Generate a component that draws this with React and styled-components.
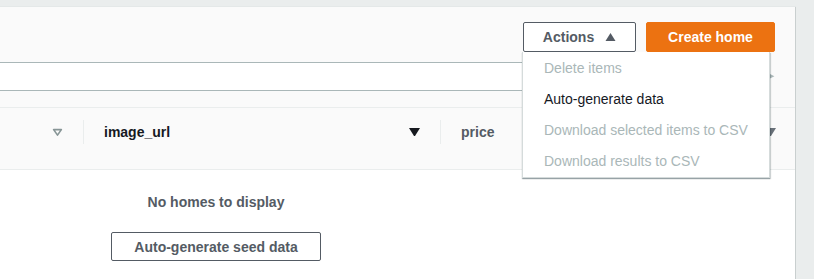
import React from "react";
import styled, { createGlobalStyle } from "styled-components";

// ===== Global =====
const GlobalStyle = createGlobalStyle`
  html, body {
    margin: 0;
    padding: 0;
    background: #eaeded;
    font-family: "Liberation Sans", Arial, sans-serif;
    overflow: hidden;
  }
`;

// ===== Layout =====
const Page = styled.div`
  width: 814px;
  height: 279px;
  padding-top: 7px;
  box-sizing: border-box;
  overflow: hidden;
`;

const Panel = styled.div`
  width: 815px;
  margin-left: -20px;
  height: 272px;
  background: #fafafa;
  border-right: 1px solid #c9cfcf;
  box-shadow: 0 -1px 0 #e4e8e8;
`;

const Header = styled.div`
  height: 55px;
  box-sizing: border-box;
  padding: 15px 20px 0 0;
  display: flex;
  justify-content: flex-end;
  gap: 10px;
`;

const ActionsWrap = styled.div`
  position: relative;
`;

const Button = styled.button`
  height: 30px;
  box-sizing: border-box;
  border-radius: 2px;
  font-family: inherit;
  font-size: 14px;
  font-weight: 700;
  display: inline-flex;
  align-items: center;
  justify-content: center;
  gap: 11px;
  cursor: pointer;
  border: 1px solid ${({ $primary }) => ($primary ? "#ec7211" : "#545b64")};
  background: ${({ $primary }) => ($primary ? "#ec7211" : "#ffffff")};
  color: ${({ $primary }) => ($primary ? "#ffffff" : "#545b64")};
  width: ${({ $w }) => $w}px;
`;

const Menu = styled.ul`
  position: absolute;
  top: 30px;
  left: -1px;
  width: 246px;
  margin: 0;
  padding: 1px 0 0;
  list-style: none;
  background: #ffffff;
  border: 1px solid #d5dbdb;
  border-top: none;
  box-shadow: 0 1px 1px rgba(0, 28, 36, 0.3), 1px 1px 1px rgba(0, 28, 36, 0.15);
  z-index: 10;
`;

const MenuItem = styled.li`
  height: 31px;
  line-height: 31px;
  padding-left: 21px;
  font-size: 14px;
  color: ${({ $disabled }) => ($disabled ? "#aab7b8" : "#16191f")};
`;

const SearchRow = styled.div`
  height: 29px;
  display: flex;
  align-items: center;
  gap: 8px;
`;

const SearchInput = styled.div`
  width: 780px;
  height: 29px;
  box-sizing: border-box;
  background: #ffffff;
  border-top: 1px solid #aab7b8;
  border-bottom: 1px solid #aab7b8;
`;

const Spacer = styled.div`
  height: 16px;
  border-bottom: 1px solid #eaeded;
`;

const HeadRow = styled.div`
  height: 62px;
  box-sizing: border-box;
  padding-top: 12px;
  display: flex;
  align-items: flex-start;
  border-bottom: 1px solid #eaeded;
`;

const HeadCell = styled.div`
  width: ${({ $w }) => $w}px;
  flex-shrink: 0;
  height: 24px;
  box-sizing: border-box;
  display: flex;
  align-items: center;
  justify-content: space-between;
  padding: 0 20px 0 20px;
  border-left: ${({ $first }) => ($first ? "none" : "1px solid #eaeded")};
  font-size: 14px;
  font-weight: 700;
  color: ${({ $active }) => ($active ? "#16191f" : "#545b64")};
`;

const Body = styled.div`
  background: #ffffff;
  height: 110px;
  padding-left: 20px;
`;

const EmptyState = styled.div`
  width: 432px;
  display: flex;
  flex-direction: column;
  align-items: center;
  padding-top: 24px;
`;

const EmptyText = styled.div`
  font-size: 14px;
  font-weight: 700;
  color: #545b64;
  line-height: 16px;
`;

const SeedButton = styled(Button)`
  margin-top: 22px;
  height: 29px;
`;

// ===== Icons =====
const Caret = ({ dir = "down", fill = "#16191f", stroke, size = 11 }) => (
  <svg width={size} height={size * 0.8} viewBox="0 0 10 8">
    {dir === "down" ? (
      <polygon
        points={stroke ? "1.5,1.5 8.5,1.5 5,6.5" : "0,0 10,0 5,8"}
        fill={stroke ? "none" : fill}
        stroke={stroke}
        strokeWidth={stroke ? 1.5 : 0}
        strokeLinejoin="round"
      />
    ) : dir === "up" ? (
      <polygon points="0,8 10,8 5,0" fill={fill} />
    ) : (
      <polygon points="0,0 8,4 0,8" fill={fill} />
    )}
  </svg>
);

export default function App() {
  return (
    <>
      <GlobalStyle />
      <Page>
        <Panel>
          <Header>
            <ActionsWrap>
              <Button $w={113}>
                Actions
                <Caret dir="up" fill="#545b64" size={11} />
              </Button>
              <Menu>
                <MenuItem $disabled>Delete items</MenuItem>
                <MenuItem>Auto-generate data</MenuItem>
                <MenuItem $disabled>Download selected items to CSV</MenuItem>
                <MenuItem $disabled>Download results to CSV</MenuItem>
              </Menu>
            </ActionsWrap>
            <Button $primary $w={129}>
              Create home
            </Button>
          </Header>
          <SearchRow>
            <SearchInput />
            <Caret dir="right" fill="#aab7b8" size={8} />
          </SearchRow>
          <Spacer />
          <HeadRow>
            <HeadCell $first $w={103}>
              <span />
              <Caret stroke="#879596" size={11} />
            </HeadCell>
            <HeadCell $w={357} $active>
              image_url
              <Caret fill="#16191f" size={11} />
            </HeadCell>
            <HeadCell $w={356}>
              price
              <Caret fill="#687078" size={11} />
            </HeadCell>
          </HeadRow>
          <Body>
            <EmptyState>
              <EmptyText>No homes to display</EmptyText>
              <SeedButton $w={210}>Auto-generate seed data</SeedButton>
            </EmptyState>
          </Body>
        </Panel>
      </Page>
    </>
  );
}
